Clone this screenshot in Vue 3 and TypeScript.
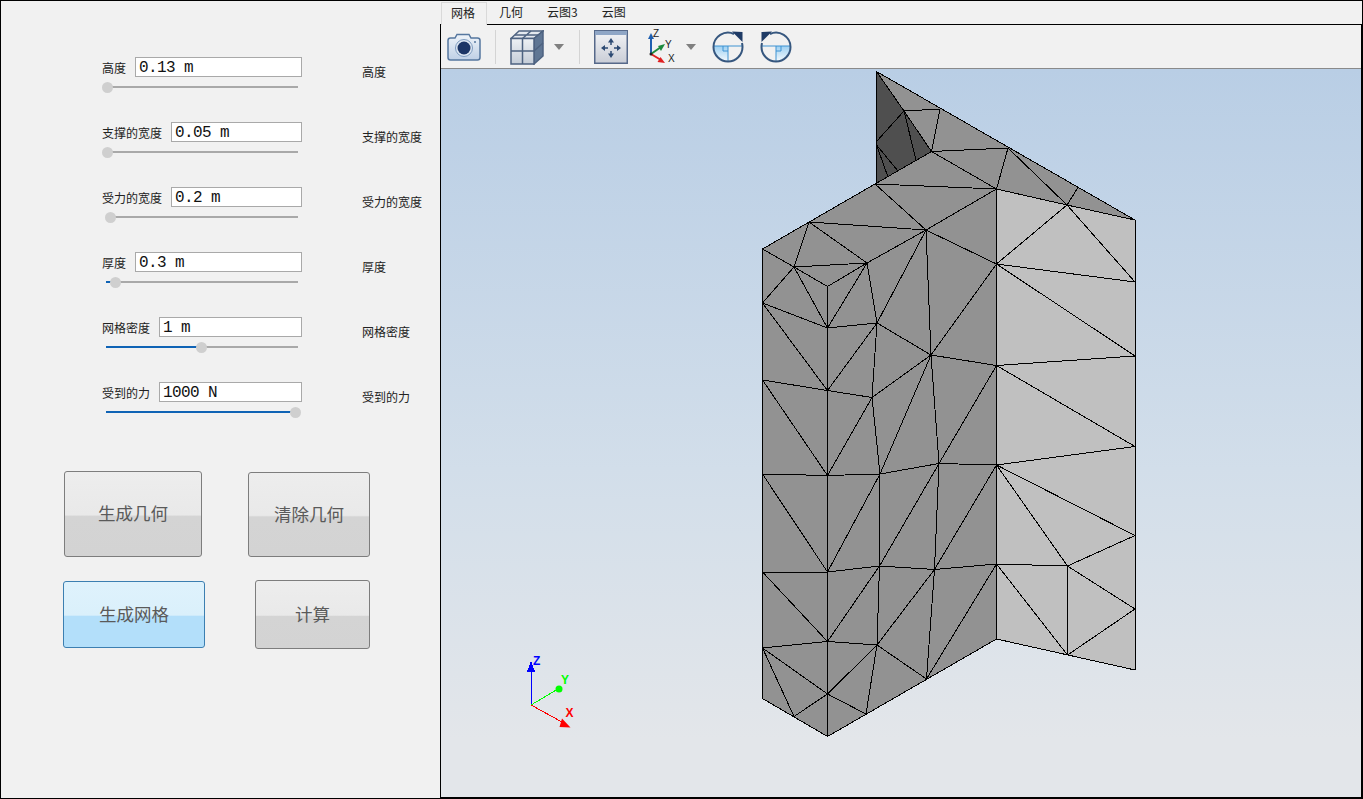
<script setup lang="ts">
interface Param {
  label: string;
  value: string;
  percent: number;
}

const params: Param[] = [
  { label: "高度", value: "0.13 m", percent: 0 },
  { label: "支撑的宽度", value: "0.05 m", percent: 0.5 },
  { label: "受力的宽度", value: "0.2 m", percent: 2.1 },
  { label: "厚度", value: "0.3 m", percent: 4.3 },
  { label: "网格密度", value: "1 m", percent: 50.5 },
  { label: "受到的力", value: "1000 N", percent: 100 },
];

const tabs = ["网格", "几何", "云图3", "云图"];

// mesh nodes, in page pixels
const nodes: Record<string, [number, number]> = {
  a: [876.5, 71.5], b: [904, 111], c: [940, 109], d: [931.5, 151.5], e: [1008, 148],
  f: [996.5, 189], g: [1078, 187.5], h: [1067, 205], i: [1135, 220], j: [875, 184],
  k: [809, 222], l: [926, 230], m: [762.5, 249], n: [794, 267], o: [867, 263],
  p: [827.5, 286.5], q: [762.5, 303], r: [827.5, 328], s: [877, 323], t: [996.5, 264],
  u: [1135, 282], v: [931, 355], w: [996.5, 365.5], x: [1135, 356], y: [762.5, 380],
  z: [827.5, 390.5], aa: [872, 397.5], ab: [762.5, 474], ac: [827.5, 475.5], ad: [880, 474],
  ae: [939, 463.5], af: [996.5, 465], ag: [1135, 446.5], ah: [762.5, 572], ai: [827.5, 572],
  aj: [879.5, 566], ak: [934.5, 569.5], al: [996.5, 564], am: [1135, 535.5], an: [1067.5, 566],
  ao: [762.5, 648], ap: [827.5, 641.5], aq: [877, 645], ar: [926.5, 679], as: [996.5, 639],
  at: [1067.5, 655], au: [1135, 609], av: [1135, 670], aw: [827.5, 694], ax: [794, 716.5],
  ay: [866, 714], az: [827.5, 736.5], ba: [762.5, 698.5],
  p1: [876.5, 141.5], p2: [876.5, 145], p3: [916, 160], p4: [898, 171], p5: [888, 177], p6: [876.5, 183],
};

const edges = `a-i a-p6 a-b b-d b-c c-d b-p1 b-p3 p2-p4 p2-p5 d-j d-e d-f e-f e-h g-h f-h h-i
j-m j-f j-l l-f k-l k-n k-o l-o l-t f-t t-h h-u t-u t-x t-v t-w l-v l-s f-as
m-ba m-n n-p n-r n-q n-o o-p o-r o-s p-r q-r q-z r-s r-z s-z s-v s-aa v-w v-aa v-ad v-ae w-x w-ae w-ag
i-av y-z z-aa aa-v y-ac z-ac aa-ac aa-ad ab-ac ac-ad ad-ae ae-af af-ag af-w
ab-ai ac-ai ad-ai ad-aj ae-aj ae-ak af-ak af-al af-an af-am an-am al-an ai-aj aj-ak ak-al ab-ah ah-ai
ah-ap ai-ap aj-ap aj-aq ak-aq ak-ar al-ar al-as al-at an-at an-au at-au ao-ap ap-aq aq-ar
ao-aw ao-ax ap-aw aq-aw aq-ay aw-ax aw-ay aw-az ba-az az-as as-av`
  .split(/\s+/)
  .map((e) => {
    const [from, to] = e.split("-");
    return { x1: nodes[from][0], y1: nodes[from][1], x2: nodes[to][0], y2: nodes[to][1] };
  });

const poly = (names: string) =>
  names
    .split(" ")
    .map((n) => nodes[n].join(","))
    .join(" ");

const midFace = poly("a i h f as az ba m k j d");
const lightFace = poly("f h i av at as");
const darkFace = poly("a d p6");

// handle travels 188px along the 192px track
const handleLeft = (percent: number) => `${(percent / 100) * 188 - 4.5}px`;
const fillWidth = (percent: number) => `${(percent / 100) * 188 + 1}px`;
</script>

<template>
  <div class="window">
    <aside class="panel">
      <div v-for="p in params" :key="p.label" class="param-row">
        <div class="param">
          <div class="param-head">
            <span class="param-label">{{ p.label }}</span>
            <input class="param-input" :value="p.value" readonly />
          </div>
          <div class="slider">
            <div class="slider-fill" :style="{ width: fillWidth(p.percent) }"></div>
            <div class="slider-handle" :style="{ left: handleLeft(p.percent) }"></div>
          </div>
        </div>
        <span class="side-label">{{ p.label }}</span>
      </div>

      <div class="button-row first">
        <button class="action geometry">生成几何</button>
        <button class="action clear">清除几何</button>
      </div>
      <div class="button-row second">
        <button class="action mesh">生成网格</button>
        <button class="action solve">计算</button>
      </div>
    </aside>

    <main class="workspace">
      <nav class="tabs">
        <span v-for="(t, i) in tabs" :key="t" class="tab" :class="{ active: i === 0 }">{{ t }}</span>
      </nav>
      <section class="frame">
        <div class="toolbar">
          <!-- camera -->
          <svg class="ico camera" width="34" height="28" viewBox="0 0 34 28">
            <defs>
              <linearGradient id="camBody" x1="0" y1="0" x2="0" y2="1">
                <stop offset="0" stop-color="#eef3f9" />
                <stop offset="1" stop-color="#bfd0e6" />
              </linearGradient>
            </defs>
            <path d="M1 7.500Q1 5 3.500 5H8L10 1.500H22L24 5H30.500Q33 5 33 7.500V24.500Q33 27 30.500 27H3.500Q1 27 1 24.500Z" fill="url(#camBody)" stroke="#56779f" stroke-width="1.500" />
            <circle cx="17" cy="15" r="8.500" fill="#dfe8f3" stroke="#7f9cc0" />
            <circle cx="17" cy="15" r="6.500" fill="#1c3566" />
            <circle cx="28" cy="9" r="1" fill="#56779f" />
          </svg>
          <i class="sep first-sep"></i>
          <!-- cube -->
          <svg class="ico cube" width="34" height="35" viewBox="0 0 34 35">
            <defs>
              <linearGradient id="cubeFace" x1="0" y1="0" x2="0" y2="1">
                <stop offset="0" stop-color="#eef1f5" />
                <stop offset="1" stop-color="#c4ccd7" />
              </linearGradient>
            </defs>
            <path d="M1 8.500L9 1H33L24 8.500Z" fill="#e4e9ef" stroke="#4d6280" stroke-width="1.500" />
            <path d="M24 8.500L33 1V26L24 34Z" fill="#5f7694" stroke="#4d6280" stroke-width="1.500" />
            <rect x="1" y="8.500" width="23" height="25.500" fill="url(#cubeFace)" stroke="#4d6280" stroke-width="1.500" />
            <path d="M12.500 8.500V34M1 21H24M24 21L33 13M12.500 8.500L21 1M5 5H28" fill="none" stroke="#4d6280" stroke-width="1.500" />
          </svg>
          <i class="caret"></i>
          <i class="sep second-sep"></i>
          <!-- fit to window -->
          <svg class="ico fit" width="34" height="34" viewBox="0 0 34 34">
            <defs>
              <linearGradient id="fitFace" x1="0" y1="0" x2="0" y2="1">
                <stop offset="0" stop-color="#f3f4f7" />
                <stop offset="1" stop-color="#c9cdd6" />
              </linearGradient>
            </defs>
            <rect x="0.750" y="0.750" width="32.500" height="32.500" fill="url(#fitFace)" stroke="#56698a" stroke-width="1.500" />
            <rect x="1" y="1" width="32" height="4" fill="#8fa6c6" />
            <path d="M17 11.500V15M17 21V24.500M10.500 18H14M20 18H23.500" stroke="#2d4a73" stroke-width="1.500" />
            <path d="M17 8L20 12.500H14ZM17 28L14 23.500H20ZM7 18L11 15V21ZM27 18L23 21V15Z" fill="#2d4a73" />
          </svg>
          <!-- axes -->
          <svg class="ico axes" width="30" height="36" viewBox="0 0 30 36">
            <path d="M5 25V9" stroke="#1f5fb0" stroke-width="2" fill="none" />
            <path d="M5 4L8 10H2Z" fill="#1f5fb0" />
            <path d="M5 25L15 18" stroke="#1c8a3c" stroke-width="2" fill="none" />
            <path d="M19 15L15 22L12 17Z" fill="#1c8a3c" />
            <path d="M5 25L15 31" stroke="#e02020" stroke-width="2" fill="none" />
            <path d="M19 34L11.500 33L14.500 28Z" fill="#e02020" />
            <circle cx="5" cy="25" r="1.500" fill="#222" />
            <text x="7" y="8" class="axis-letter">Z</text>
            <text x="19" y="19" class="axis-letter">Y</text>
            <text x="22" y="33" class="axis-letter">X</text>
          </svg>
          <i class="caret axes-caret"></i>
          <!-- rotate -->
          <svg v-for="side in ['cw', 'ccw']" :key="side" class="ico rotate" :class="side" width="32" height="32" viewBox="0 0 32 32">
            <defs>
              <linearGradient :id="'rot' + side" x1="0" y1="0" x2="0" y2="1">
                <stop offset="0" stop-color="#9dd0f2" />
                <stop offset="1" stop-color="#f4f9fd" />
              </linearGradient>
            </defs>
            <path d="M1.500 15H16V30.500A14.500 14.500 0 0 1 1.500 16Z" :fill="'url(#rot' + side + ')'" />
            <path d="M1.500 15H30.500M16 15V30.500" stroke="#3f93d2" stroke-width="1" fill="none" />
            <path d="M11 15V20H16" stroke="#3f93d2" stroke-width="1" fill="none" />
            <path d="M22 3A14.500 14.500 0 0 0 1.500 16A14.500 14.500 0 0 0 30.500 16Q30.500 14 30 12" fill="none" stroke="#36577f" stroke-width="2" />
            <path d="M20 0.500L30.500 1L30.500 11Z" fill="#1f3b66" />
          </svg>
        </div>
        <div class="viewport">
          <svg class="scene" viewBox="441 69 921 728" width="921" height="728">
            <polygon :points="midFace" fill="#929292" />
            <polygon :points="lightFace" fill="#c0c0c0" />
            <polygon :points="darkFace" fill="#4f4f4f" />
            <line
              v-for="(e, n) in edges"
              :key="n"
              :x1="e.x1"
              :y1="e.y1"
              :x2="e.x2"
              :y2="e.y2"
              stroke="#000"
              stroke-width="1"
            />
            <!-- triad -->
            <line x1="531" y1="705" x2="531" y2="670" stroke="#0000ff" stroke-width="1" />
            <path d="M531 661L535 671.500H527Z" fill="#0000ff" />
            <line x1="531" y1="705" x2="558" y2="689" stroke="#00ff00" stroke-width="1" />
            <circle class="smooth" cx="559" cy="689" r="3.500" fill="#00ff00" />
            <line x1="531" y1="705" x2="562" y2="722" stroke="#ff0000" stroke-width="1" />
            <path class="smooth" d="M570.500 727.500L559.500 727L562 718.500Z" fill="#ff0000" />
            <text x="533" y="664.500" class="triad" fill="#0000ff">Z</text>
            <text x="561" y="684" class="triad" fill="#00ff00">Y</text>
            <text x="565.500" y="716.500" class="triad" fill="#ff0000">X</text>
          </svg>
        </div>
      </section>
    </main>
  </div>
</template>

<style>
html,
body {
  margin: 0;
  background: #f1f1f1;
}
</style>

<style scoped>
.window {
  box-sizing: border-box;
  width: 1363px;
  height: 799px;
  display: flex;
  border: 1px solid #000;
  background: #f1f1f1;
  font-family: "Noto Sans CJK SC", "Liberation Sans", sans-serif;
  font-size: 12px;
  color: #222;
  overflow: hidden;
}

.panel {
  width: 439px;
  flex: none;
  padding: 56px 0 0 101px;
  box-sizing: border-box;
}

.param-row {
  display: flex;
  height: 65px;
}

.param {
  width: 200px;
}

.param-head {
  display: flex;
  align-items: center;
  gap: 9px;
  height: 20px;
}

.param-label {
  white-space: nowrap;
  line-height: 20px;
  margin-top: 2px;
}

.param-input {
  flex: 1;
  min-width: 0;
  box-sizing: border-box;
  height: 20px;
  padding: 2px 3px 0;
  border: 1px solid #a9a9a9;
  background: #fff;
  font-family: "Liberation Mono", monospace;
  font-size: 16px;
  letter-spacing: -0.6px;
  color: #111;
  outline: none;
}

.slider {
  position: relative;
  height: 2px;
  width: 192px;
  margin: 9px 0 0 4px;
  background: #a9a9a9;
}

.slider-fill {
  height: 100%;
  background: #0f63b5;
}

.slider-handle {
  position: absolute;
  top: -4px;
  width: 11px;
  height: 11px;
  border-radius: 50%;
  background: #cfcfcf;
}

.side-label {
  margin: 5px 0 0 60px;
  line-height: 20px;
  white-space: nowrap;
}

.button-row {
  display: flex;
}

.button-row.first {
  margin: 24px 0 0 -38px;
  align-items: flex-end;
  gap: 46px;
}

.button-row.second {
  margin: 23px 0 0 -39px;
  align-items: center;
  gap: 50px;
}

.action {
  box-sizing: border-box;
  padding: 0 0 3px;
  border: 1px solid #7d7d7d;
  border-radius: 3px;
  background: linear-gradient(#ededed 0, #e9e9e9 51%, #dedede 52%, #d4d4d4 53%, #d3d3d3 100%);
  font-family: "Noto Sans CJK SC", sans-serif;
  font-size: 17.500px;
  color: #5a5a5a;
}

.geometry {
  width: 138px;
  height: 86px;
}

.clear {
  width: 122px;
  height: 85px;
}

.mesh {
  width: 142px;
  height: 67px;
  border-color: #3c7fb1;
  background: linear-gradient(#dff2fc 0, #daf0fb 51%, #c4e6fb 52%, #b3dffa 53%, #b3dffa 100%);
}

.solve {
  width: 115px;
  height: 69px;
}

.workspace {
  flex: 1;
  min-width: 0;
  display: flex;
  flex-direction: column;
}

.tabs {
  display: flex;
  height: 23px;
  padding: 1px 0 0 1px;
  box-sizing: border-box;
}

.tab {
  padding: 0 12px;
  line-height: 20px;
}

.tab.active {
  position: relative;
  z-index: 1;
  padding: 0 11px 0 9px;
  margin-bottom: -1px;
  height: 22px;
  border: 1px solid #d9d9d9;
  border-bottom: 0;
  background: #f1f1f1;
}

.frame {
  flex: 1;
  min-height: 0;
  display: flex;
  flex-direction: column;
  border: 1px solid #000;
}

.toolbar {
  display: flex;
  align-items: center;
  height: 43px;
  flex: none;
  border-bottom: 1px solid #8a8a8a;
  padding-left: 6px;
}

.ico {
  display: block;
  flex: none;
}

.axis-letter {
  font-family: "Liberation Sans", sans-serif;
  font-size: 10px;
  fill: #222;
}

.sep {
  width: 1px;
  height: 34px;
  background: #d4d4d4;
  flex: none;
}

.first-sep {
  margin: 0 14px 0 13.500px;
}

.second-sep {
  margin: 0 14px 0 15px;
}

.caret {
  width: 0;
  height: 0;
  margin-left: 10px;
  border-left: 5.500px solid transparent;
  border-right: 5.500px solid transparent;
  border-top: 6px solid #808080;
  flex: none;
}

.cube {
  margin-top: 2px;
}

.axes {
  margin-left: 18px;
}

.axes-caret {
  margin-left: 10px;
}

.rotate {
  margin-left: 16px;
  margin-top: 1px;
}

.rotate.ccw {
  margin-left: 16px;
  transform: scaleX(-1);
}

.viewport {
  flex: 1;
  min-height: 0;
  overflow: hidden;
  background: linear-gradient(#b9cee5 0, #d2deea 55%, #e3e6ea 92%, #e3e6ea 100%);
}

.scene {
  display: block;
  shape-rendering: crispEdges;
}

.smooth {
  shape-rendering: geometricPrecision;
}

.triad {
  font-family: "Liberation Sans", sans-serif;
  font-size: 12px;
  font-weight: 700;
}
</style>
